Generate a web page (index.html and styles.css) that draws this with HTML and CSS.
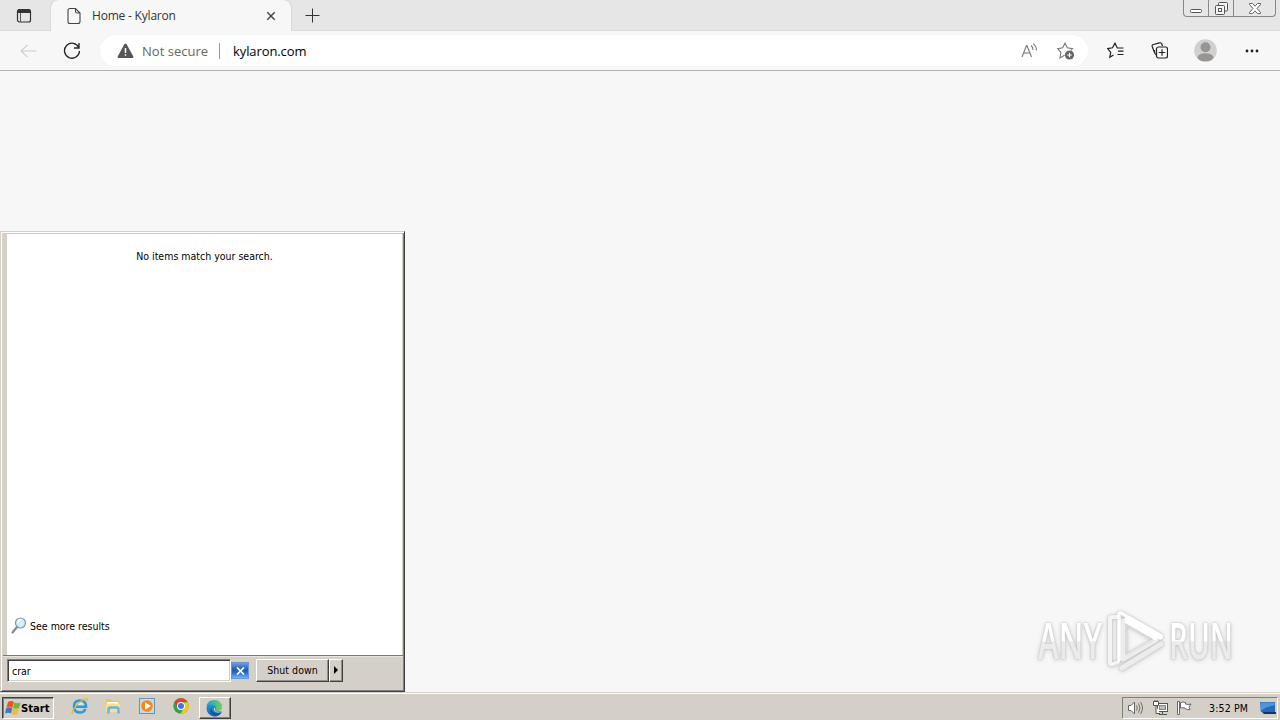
FILE: index.html
```html
<!doctype html>
<html>

<head>
    <meta charset="utf-8" />
    <title>Home - Kylaron</title>
    <link rel="stylesheet" href="styles.css">
</head>

<body>
    <header class="tabs">
        <svg class="tab-actions" width="16" height="16" viewBox="0 0 16 16">
            <rect x="1.5" y="1.5" width="13" height="12.5" rx="2" fill="none" stroke="#333" stroke-width="1.2" />
            <path d="M1.5 2.5Q2 1 4 1h8q2.500 0 2.500 2v2h-13z" fill="#333" />
            <path d="M4.500 5v9" stroke="#555" />
        </svg>
        <div class="tab">
            <svg width="16" height="18" viewBox="0 0 16 18" fill="none" stroke="#444" stroke-width="1.1">
                <path d="M4 1.500h5.500l4.500 4.500v8.500q0 2-2 2H4q-2 0-2-2v-11q0-2 2-2zM9.500 1.500v3q0 1.500 1.500 1.500h3" />
            </svg>
            <span class="tab-title">Home - Kylaron</span>
            <svg class="tab-close" width="10" height="10" viewBox="0 0 10 10">
                <path d="M1.300 1.300l7.400 7.400M8.700 1.300L1.300 8.700" stroke="#444" stroke-width="1.4" />
            </svg>
        </div>
        <svg class="tab-new" width="15" height="15" viewBox="0 0 15 15">
            <path d="M7.500 0.500v14M0.500 7.500h14" stroke="#333" />
        </svg>
        <div class="controls">
            <span class="control">
                <svg width="13" height="6" viewBox="0 0 13 6"><rect x=".5" y="1.500" width="11" height="3" rx="1" fill="#fff" stroke="#555" /></svg>
            </span>
            <span class="control">
                <svg width="13" height="13" viewBox="0 0 13 13" fill="#f4f4f4" stroke="#555">
                    <rect x="3.500" y=".5" width="9" height="8.500" rx="1" />
                    <rect x=".5" y="3.500" width="9" height="9" rx="1" />
                    <rect x="3.500" y="6.500" width="3" height="3" />
                </svg>
            </span>
            <span class="control control-close">
                <svg width="12" height="11" viewBox="0 0 12 11"><path d="M.5.5h3L6 3.200 8.500.5h3v1L8 5.500l3.500 4v1h-3L6 7.800 3.500 10.500h-3v-1L4 5.500.5 1.500z" fill="#fff" stroke="#555" stroke-width=".9" /></svg>
            </span>
        </div>
    </header>

    <nav class="toolbar">
        <svg class="back" width="17" height="14" viewBox="0 0 17 14" fill="none" stroke="#ccc" stroke-width="1.1">
            <path d="M7.500.8L1 7l6.500 6.200M1 7h15.500" />
        </svg>
        <svg class="reload" width="18" height="18" viewBox="0 0 18 18" fill="none" stroke="#222" stroke-width="1.3">
            <path d="M15.800 5.500A7.500 7.500 0 1 0 16.500 9M16 1v5h-5" />
        </svg>
        <div class="address">
            <svg class="warning" width="17" height="16" viewBox="0 0 17 16">
                <path d="M8.500.5q.7 0 1 .6l6.800 12.400q.5 1.500-1 1.500H1.700q-1.500 0-1-1.500L7.500 1.100q.3-.6 1-.6z" fill="#555" />
                <path d="M8.500 5v5M8.500 11.200v1.600" stroke="#fff" stroke-width="1.5" />
            </svg>
            <span class="not-secure">Not secure</span>
            <span class="url">kylaron.com</span>
            <svg class="read" width="17" height="16" viewBox="0 0 17 16" fill="none" stroke="#777" stroke-width="1.1">
                <path d="M1 14L5.500 2.500h.4L10.500 14M2.700 10h6M10 2.500q2 1.500 2 4.500M12.200.6q3.300 2.500 3.300 7" />
            </svg>
            <svg width="18" height="18" viewBox="0 0 18 18">
                <path d="M7.500 13.300l-4.500 2.700.9-5.700L.7 6.600l5-.8L8 1.200l2.300 4.600 5.200.8-1.700 1.900" fill="none" stroke="#777" stroke-width="1.1" />
                <circle cx="12.500" cy="13" r="4.600" fill="#666" />
                <path d="M12.500 10.700v4.600M10.200 13h4.600" stroke="#fff" stroke-width="1.1" />
            </svg>
        </div>
        <svg class="favorites" width="18" height="17" viewBox="0 0 18 17" fill="none" stroke="#222" stroke-width="1.2">
            <path d="M6.500 13l-3.700 2.300.9-5L.7 6.600l4.800-.8L8 1.200l2.300 4.800H16.500M11 9.200H16.500M10.500 12.500H16.500" />
        </svg>
        <svg class="collections" width="17" height="17" viewBox="0 0 17 17" fill="none" stroke="#222" stroke-width="1.2">
            <path d="M3.500 10.500L1.200 4.500Q.8 3 2.300 2.500L8.500.8q1.600-.2 2.200 1l.8 2.200M3.500 8v2q0 2 2 3" />
            <rect x="5.500" y="5" width="11" height="11" rx="2" fill="#f7f7f7" />
            <path d="M11 7.300v6.400M7.800 10.500h6.400" />
        </svg>
        <svg class="profile" width="23" height="23" viewBox="0 0 23 23">
            <circle cx="11.500" cy="11.500" r="11.300" fill="#d2d0ce" />
            <circle cx="11.500" cy="8.200" r="5" fill="#979593" />
            <ellipse cx="11.500" cy="18.300" rx="7.900" ry="4" fill="#979593" />
        </svg>
        <svg class="more" width="14" height="4" viewBox="0 0 14 4" fill="#222">
            <circle cx="2" cy="2" r="1.400" /><circle cx="7" cy="2" r="1.400" /><circle cx="12" cy="2" r="1.400" />
        </svg>
    </nav>

    <main class="page">
        <svg class="watermark" width="200" height="66" viewBox="0 0 200 66">
            <defs>
                <linearGradient id="letters" x2="0" y2="1">
                    <stop offset=".52" stop-color="#fff" />
                    <stop offset=".54" stop-color="#ebebeb" />
                </linearGradient>
            </defs>
            <text x="3" y="51" textLength="64" lengthAdjust="spacingAndGlyphs" fill="url(#letters)">ANY</text>
            <g fill="none" stroke-linecap="round" stroke-linejoin="round">
                <path d="M83 9h-6q-2 0-2 2v44q0 2 3 1l5-2" stroke="#f4f4f4" stroke-width="4" />
                <path d="M126 36L87 60M121 32L88 51V13" stroke="#ececec" stroke-width="5" />
                <path d="M84 52V7q0-3 3-1.500L125 27q3 2 0 3L91 11" stroke="#fff" stroke-width="3.500" />
                <path d="M92 17l26 15-26 15z" stroke="#e0e0e0" />
                <path d="M91 14l30 17" stroke="#fff" stroke-width="3" />
            </g>
            <text x="134" y="51" textLength="64" lengthAdjust="spacingAndGlyphs" fill="url(#letters)">RUN</text>
        </svg>
    </main>

    <section class="start-menu">
        <div class="results">
            <p class="empty">No items match your search.</p>
            <div class="see-more">
                <svg width="16" height="17" viewBox="0 0 16 17">
                    <path d="M6 10L1.500 15.500" stroke="#888" stroke-width="2.200" stroke-linecap="round" />
                    <circle cx="9.500" cy="6" r="5" fill="#d7effa" stroke="#8098a7" stroke-width="1.200" />
                    <path d="M6.500 6q0-3 3-3" fill="none" stroke="#fff" stroke-width="1.500" />
                </svg>
                <span>See more results</span>
            </div>
        </div>
        <div class="menu-bottom">
            <div class="search">crar</div>
            <div class="clear">
                <svg width="9" height="8" viewBox="0 0 9 8"><path d="M1 .5l7 7M8 .5l-7 7" stroke="#fff" stroke-width="1.700" /></svg>
            </div>
            <div class="shutdown">Shut down</div>
            <div class="shutdown-more">
                <svg width="5" height="8" viewBox="0 0 5 8"><path d="M0 0l4 4-4 4z" /></svg>
            </div>
        </div>
    </section>

    <footer class="taskbar">
        <div class="start">
            <svg width="17" height="16" viewBox="0 0 17 16">
                <path d="M3 2q3-2 6 0L7.500 7.500q-3-1.500-6 0z" fill="#e85524" />
                <path d="M9.500 2.500q3 1.500 6 0L14 8q-3 1.500-6 0z" fill="#79b52b" />
                <path d="M1.300 8q3-1.500 6 0L6 13.500q-3-1.500-6 0z" fill="#3d78c8" />
                <path d="M8 8.500q3 1.500 6 0L12.500 14q-3 1.500-6 0z" fill="#f5bd25" />
            </svg>
            <span>Start</span>
        </div>
        <div class="quick-launch">
            <!-- Internet Explorer -->
            <svg width="18" height="18" viewBox="0 0 18 18" fill="none">
                <path d="M14.500 12q-1.500 3.500-5.500 3.500-6 0-6-6t6-6q6 0 6 6.300H5" stroke="#2c9bdc" stroke-width="2.600" />
                <path d="M5.500 8q.5-2.200 3.500-2.200T12.500 8z" fill="#d4ecf8" />
                <path d="M2.500 15.500Q-1 17.500 3.500 11 8 4.500 13.500 2q4-1.500 2.500 2.500" stroke="#e4b93b" stroke-width="1.300" />
            </svg>
            <!-- Explorer -->
            <svg width="18" height="18" viewBox="0 0 18 18">
                <path d="M2 3q0-1 1-1h4l1 1.500h6q1 0 1 1V14H2z" fill="#e4c667" />
                <path d="M3 5h11v2H3z" fill="#fff" />
                <path d="M2 6.500h14V15H2z" fill="#f7e18f" />
                <path d="M4.500 16.500v-4q0-2 2-2h6q2 0 2 2v4" fill="none" stroke="#67b5dd" stroke-width="2.500" />
            </svg>
            <!-- Media Player -->
            <svg width="18" height="18" viewBox="0 0 18 18">
                <rect x="1.500" y="1.500" width="15" height="15" fill="#b9daf2" stroke="#6594bd" />
                <circle cx="9" cy="9" r="6.300" fill="#f58b16" stroke="#fff" stroke-width=".5" />
                <path d="M7 5.200L13 9l-6 3.800z" fill="#fff" />
            </svg>
            <!-- Chrome -->
            <svg width="18" height="18" viewBox="0 0 18 18">
                <circle cx="9" cy="9" r="7.700" fill="#34a04c" />
                <path d="M2.300 5.200A7.700 7.700 0 0 1 15.700 5.200H9v4l-3.300 1.700z" fill="#df4231" />
                <path d="M15.700 5.200A7.700 7.700 0 0 1 8.500 16.700l3.800-6V5.200z" fill="#fbc51b" />
                <circle cx="9" cy="9" r="4" fill="#fff" />
                <circle cx="9" cy="9" r="3" fill="#3979e3" />
            </svg>
        </div>
        <div class="task-edge">
            <svg width="18" height="18" viewBox="0 0 18 18">
                <defs>
                    <linearGradient id="edge-top"><stop stop-color="#239ddc" /><stop offset="1" stop-color="#6bd45a" /></linearGradient>
                    <linearGradient id="edge-side" x2="0" y2="1"><stop stop-color="#28a8df" /><stop offset="1" stop-color="#1460b8" /></linearGradient>
                </defs>
                <path d="M17 12.500A8 8 0 1 1 17 6.500L11 9q-1 3 6 3.500z" fill="url(#edge-side)" />
                <path d="M1.300 7Q3 1 9 1q8 .3 8 7 0 4-4.500 4-2.500 0-2.500-1 1-1 1-2.300Q11 6 6.500 5.500 3 5.200 1.300 7z" fill="url(#edge-top)" />
                <path d="M6.500 8.500q-.8 5 5 6 3 .5 5-1.500-1 2.500-3.500 3.500-5.500 0-7.300-3.500-1-2.500.8-4.500z" fill="#174f99" />
                <path d="M10.500 8.500q-.8 1.500-.5 3 1.500 1.700 7.500 1-4 2-7 .2-2.500-1.500-1.500-3.500z" fill="#d4d0c8" />
            </svg>
        </div>
        <div class="tray">
            <svg width="18" height="16" viewBox="0 0 18 16" stroke="#666" fill="none">
                <path d="M1.500 5.500h2.500l3.500-3.500v12l-3.500-3.500h-2.500z" fill="#fff" />
                <path d="M9.500 5.500q1.500 2.500 0 5M11.500 3.500q3 4.500 0 9M13.500 2q4 6 0 12" stroke-width=".9" />
            </svg>
            <svg class="network" width="17" height="16" viewBox="0 0 17 16" stroke="#555" fill="#fff">
                <rect x="5.500" y="3.500" width="10" height="8" /><rect x="7.500" y="5.500" width="6" height="4" fill="#bbb" stroke="#888" />
                <path d="M7 14.500h8M10.500 12v2.500M1.500 1.500h5v4h-5zM3 0v2M5 0v2M4 6v7.500h4" />
            </svg>
            <svg class="flag" width="17" height="16" viewBox="0 0 17 16" stroke="#666" fill="#fff">
                <path d="M4.500 2.500q2-1 5 0v1.500q3 1 5.500 0l-2 3 1 2.500q-3 .7-5-1V8q-2-.5-4.500 0z" />
                <path d="M1.500 1.500h2v13h-2z" />
            </svg>
            <span class="clock">3:52 PM</span>
            <svg width="18" height="16" viewBox="0 0 18 16">
                <path d="M1 2h15v10H2z" fill="#2469bd" />
                <path d="M1.500 2.500h14v3Q8 6 1.500 11z" fill="#5294dc" />
                <path d="M3 12h14v2H5z" fill="#17365f" />
            </svg>
        </div>
    </footer>
</body>

</html>
```
FILE: styles.css
```css
* {
    box-sizing: border-box;
}

html,
body {
    padding: 0;
    margin: 0;
    width: 100%;
    height: 100%;
    overflow: hidden;
}

body {
    display: flex;
    flex-direction: column;
    font-family: 'DejaVu Sans Condensed', 'DejaVu Sans', sans-serif;
    font-size: 10.5px;
    color: #000;
    background: #f7f7f7;
}

svg {
    display: block;
    flex: none;
}

/* tab strip */
.tabs {
    display: flex;
    height: 31px;
    flex: none;
    background: #e6e6e6;
    border-bottom: 1px solid #dcdcdc;
    font-family: 'Open Sans', sans-serif;
}

.tab-actions {
    margin: 8px 0 0 16px;
}

.tab {
    display: flex;
    align-items: center;
    width: 240px;
    height: 31px;
    margin-left: 19px;
    padding: 0 15px;
    background: #f7f7f7;
    border-radius: 8px 8px 0 0;
    box-shadow: 0 0 2px #bbb;
}

.tab-title {
    margin-left: 10px;
    font-size: 12px;
    letter-spacing: -.2px;
    color: #333;
}

.tab-close {
    margin-left: auto;
}

.tab-new {
    margin: 8px 0 0 14px;
}

.controls {
    display: flex;
    width: 93px;
    height: 17px;
    margin: 0 4px 0 auto;
    border: 1px solid #888;
    border-top: 0;
    border-radius: 0 0 4px 4px;
}

.control {
    display: flex;
    align-items: center;
    justify-content: center;
    width: 25px;
    border-right: 1px solid #888;
}

.control:first-child {
    padding-top: 5px;
}

.control-close {
    flex: 1;
    border: 0;
}

/* toolbar */
.toolbar {
    display: flex;
    align-items: center;
    height: 40px;
    flex: none;
    padding-left: 20px;
    background: #f7f7f7;
    border-bottom: 1px solid #b4b4b4;
    font-family: 'Open Sans', sans-serif;
}

.reload {
    margin-left: 26px;
}

.address {
    display: flex;
    align-items: center;
    width: 988px;
    height: 31px;
    margin-left: 19px;
    padding: 0 13px 0 17px;
    background: #fff;
    border-radius: 16px;
    box-shadow: 0 0 2px #eee;
    font-size: 13px;
}

.not-secure {
    width: 78px;
    margin-left: 8px;
    color: #666;
    letter-spacing: .02px;
    border-right: 1px solid #999;
    line-height: 16px;
}

.url {
    margin-left: 13px;
    letter-spacing: -.1px;
}

.read {
    margin: 0 19px 0 auto;
}

.favorites {
    margin-left: 19px;
}

.collections {
    margin-left: 26px;
}

.profile {
    margin-left: 26px;
}

.more {
    margin-left: 28px;
}

/* page */
.page {
    display: flex;
    flex: 1;
    align-items: flex-end;
    justify-content: flex-end;
    padding: 0 45px 18px 0;
}

.watermark {
    overflow: visible;
    font-family: 'Open Sans', sans-serif;
    font-size: 51px;
    font-weight: 600;
    filter: drop-shadow(0 0 1px #bbb) drop-shadow(0 1px 2px #d4d4d4);
}

/* start menu */
.start-menu {
    position: absolute;
    left: 0;
    bottom: 28px;
    display: flex;
    flex-direction: column;
    width: 405px;
    height: 461px;
    background: #d4d0c8;
    border: 1px solid #d4d0c8;
    border-right-color: #404040;
    border-bottom-color: #404040;
    box-shadow: inset 1px 1px #fff, inset -1px -1px #808080;
}

.results {
    display: flex;
    flex-direction: column;
    justify-content: space-between;
    height: 422px;
    margin: 1px 1px 0 6px;
    padding: 15px 4px 21px;
    background: #fff;
    border-top: 1px solid #c8c5be;
    border-right: 1px solid #d4d0c8;
}

.empty {
    margin: 0;
    text-align: center;
    line-height: 15px;
}

.see-more {
    display: flex;
    align-items: center;
    gap: 3px;
}

.menu-bottom {
    display: flex;
    flex: 1;
    align-items: flex-start;
    margin: 0 1px 1px 2px;
    padding: 3px 0 0 4px;
    border-top: 1px solid #777;
    box-shadow: inset 0 1px #e8e6e1;
}

.search {
    width: 224px;
    height: 23px;
    padding: 0 4px;
    line-height: 22px;
    background: #fff;
    border: 1px solid #808080;
    border-right-color: #fff;
    border-bottom-color: #fff;
    box-shadow: inset 1px 1px #404040, inset -1px -1px #d4d0c8;
}

.clear {
    display: flex;
    align-items: center;
    justify-content: center;
    width: 18px;
    height: 17px;
    margin: 3px 0 0;
    background: linear-gradient(#6f9ddd, #2357b6 45%, #286bd0 65%, #70b7f3);
    border: 1px solid #6997d2;
}

.shutdown,
.shutdown-more {
    display: flex;
    align-items: center;
    justify-content: center;
    height: 23px;
    padding-bottom: 1px;
    border: 1px solid;
    border-color: #fff #404040 #404040 #fff;
    box-shadow: inset -1px -1px #909090;
}

.shutdown {
    width: 73px;
    margin-left: 7px;
    letter-spacing: .05px;
}

.shutdown-more {
    width: 14px;
}

/* taskbar */
.taskbar {
    display: flex;
    align-items: flex-start;
    flex: none;
    height: 28px;
    padding: 4px 2px 0;
    background: #d4d0c8;
    border-top: 1px solid #d4d0c8;
    box-shadow: inset 0 1px #fff;
}

.start {
    display: flex;
    align-items: center;
    width: 52px;
    height: 22px;
    padding-left: 2px;
    font-weight: bold;
    font-size: 11.2px;
    border: 1px solid;
    border-color: #404040 #fff #fff #404040;
    box-shadow: inset 1px 1px #808080;
}

.start span {
    margin-left: -1px;
}

.quick-launch {
    display: flex;
    gap: 15.7px;
    margin: 0 0 0 16.5px;
}

.task-edge {
    display: flex;
    align-items: center;
    justify-content: center;
    width: 32px;
    height: 22px;
    margin-left: 9px;
    padding: 0 1px 1px 0;
    border: 1px solid;
    border-color: #fff #404040 #404040 #fff;
    box-shadow: inset -1px -1px #808080;
}

.tray {
    display: flex;
    align-items: center;
    width: 156px;
    height: 22px;
    margin-left: auto;
    padding: 0 0 1px 4px;
    border: 1px solid;
    border-color: #808080 #fff #fff #808080;
}

.network {
    margin-left: 7px;
}

.flag {
    margin-left: 7px;
}

.clock {
    width: 41px;
    margin: 0 9px 0 16px;
    white-space: nowrap;
    letter-spacing: .15px;
}
```
